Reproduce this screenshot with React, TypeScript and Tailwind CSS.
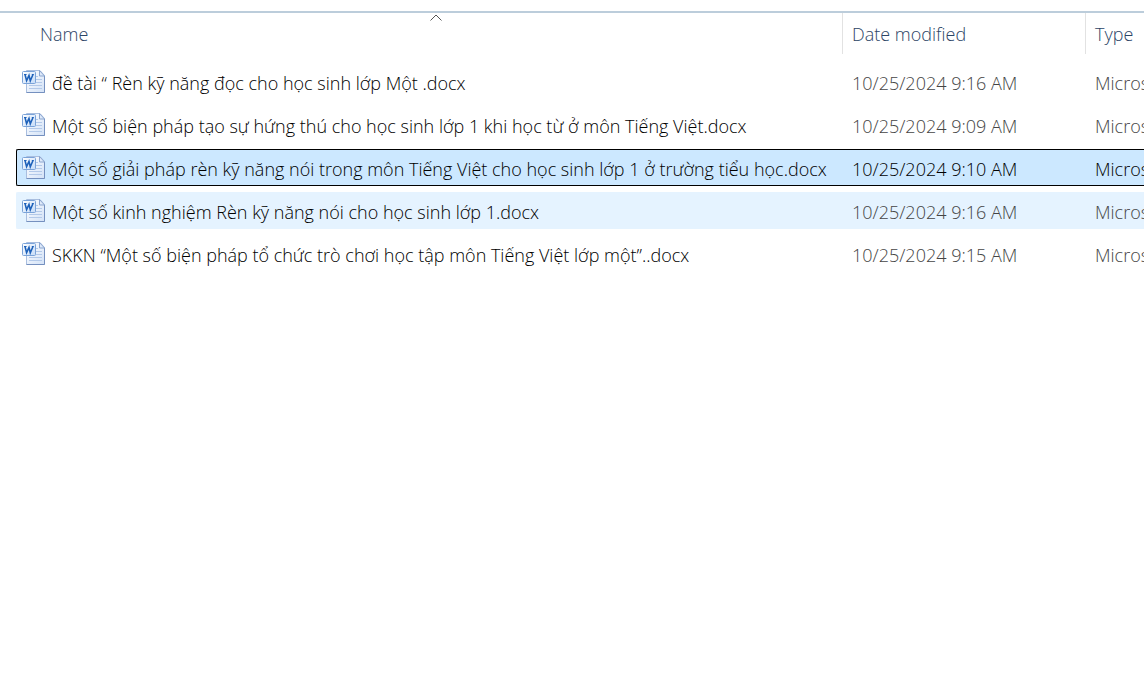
import React from "react";

type Status = "normal" | "selected" | "hover";

interface FileRow {
  name: string;
  modified: string;
  status: Status;
}

const files: FileRow[] = [
  { name: "đề tài “ Rèn kỹ năng đọc cho học sinh lớp Một .docx", modified: "10/25/2024 9:16 AM", status: "normal" },
  { name: "Một số biện pháp tạo sự hứng thú cho học sinh lớp 1 khi học từ ở môn Tiếng Việt.docx", modified: "10/25/2024 9:09 AM", status: "normal" },
  { name: "Một số giải pháp rèn kỹ năng nói trong môn Tiếng Việt cho học sinh lớp 1 ở trường tiểu học.docx", modified: "10/25/2024 9:10 AM", status: "selected" },
  { name: "Một số kinh nghiệm Rèn kỹ năng nói cho học sinh lớp 1.docx", modified: "10/25/2024 9:16 AM", status: "hover" },
  { name: "SKKN “Một số biện pháp tổ chức trò chơi học tập môn Tiếng Việt lớp một”..docx", modified: "10/25/2024 9:15 AM", status: "normal" },
];

const cellStyles: Record<Status, string> = {
  normal: "border-transparent text-[#444444]",
  selected: "border-black bg-[#cce8ff] text-black",
  hover: "border-[#e5f3ff] bg-[#e5f3ff] text-[#444444]",
};

function WordIcon() {
  return (
    <svg viewBox="0 0 24 26" className="h-[26px] w-6 shrink-0" aria-hidden="true">
      <defs>
        <linearGradient id="page" x1="0" y1="0" x2="1" y2="1">
          <stop offset="0" stopColor="#ffffff" />
          <stop offset="1" stopColor="#d3e2f7" />
        </linearGradient>
        <linearGradient id="badge" x1="0" y1="0" x2="1" y2="1">
          <stop offset="0" stopColor="#ffffff" />
          <stop offset="1" stopColor="#c4dbf8" />
        </linearGradient>
      </defs>
      <path d="M4.500 1.500h13.500l4.500 5v17h-18z" fill="url(#page)" stroke="#a9bedf" />
      <path d="M4.500 23.500h18V7" fill="none" stroke="#7590bf" />
      <path d="M17.500 1.500v5.500h5z" fill="#dfeafa" stroke="#8ba6d0" strokeLinejoin="round" />
      <path d="M14 7.500h2M14 10.500h6M14 13.500h6M7 16.500h13M7 19.500h13" stroke="#b3c9e9" />
      <rect x="0.500" y="2.500" width="13" height="12" rx="1" fill="url(#badge)" stroke="#7ba3d8" />
      <path d="M3 5.500l1.600 6.200 2.400-5.200 1.300 5.200L11 5.500" fill="none" stroke="#1f62ba" strokeWidth="1.600" />
      <path d="M2 5.500h2.600M9.800 5.500h2" stroke="#1f62ba" />
    </svg>
  );
}

export default function App() {
  return (
    <main className="min-h-screen overflow-hidden bg-white pt-[11px] font-['Open_Sans','Noto_Sans',sans-serif] text-lg leading-6 font-light">
      <div className="border-t-2 border-[#bccddb] pl-4">
        <table className="w-full table-fixed border-collapse text-left">
          <colgroup>
            <col />
            <col className="w-[243px]" />
            <col className="w-[59px]" />
          </colgroup>
          <thead>
            <tr className="h-[47px] align-top text-[#2c4566]">
              <th scope="col" aria-sort="ascending" className="p-0 pl-[14px] font-light">
                <button type="button" className="relative flex h-[41px] w-full items-center pl-[10px]">
                  Name
                  <svg viewBox="0 0 12 7" className="absolute top-px left-1/2 h-[7px] w-3 -translate-x-1/2" fill="none" stroke="#555" aria-hidden="true">
                    <path d="M.5 6.500 6 1l5.500 5.500" />
                  </svg>
                </button>
              </th>
              <th scope="col" className="p-0 font-light">
                <button type="button" className="flex h-[41px] w-full items-center border-l border-[#e2e2e2] pl-[9px]">Date modified</button>
              </th>
              <th scope="col" className="p-0 font-light">
                <button type="button" className="flex h-[41px] w-full items-center border-l border-[#e2e2e2] pl-[9px]">Type</button>
              </th>
            </tr>
          </thead>
          <tbody className="whitespace-nowrap">
            {files.map((file) => (
              <tr key={file.name} aria-selected={file.status === "selected"}>
                <td className="p-0 py-[3px]">
                  <div className={`flex h-[37px] items-center gap-[6px] rounded-l-xs border-y border-l pl-[5px] ${cellStyles[file.status]}`}>
                    <WordIcon />
                    <span className="pt-[2px] text-black">{file.name}</span>
                  </div>
                </td>
                <td className="p-0 py-[3px]">
                  <div className={`flex h-[37px] items-center border-y pt-[2px] pl-[10px] ${cellStyles[file.status]}`}>{file.modified}</div>
                </td>
                <td className="p-0 py-[3px]">
                  <div className={`flex h-[37px] items-center overflow-hidden border-y pt-[2px] pl-[10px] ${cellStyles[file.status]}`}>Micros</div>
                </td>
              </tr>
            ))}
          </tbody>
        </table>
      </div>
    </main>
  );
}
